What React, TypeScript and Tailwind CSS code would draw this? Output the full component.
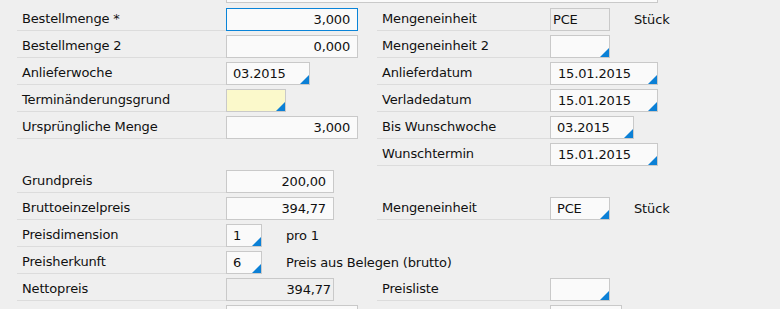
import React from "react";

type Variant = "normal" | "focus" | "readonly" | "yellow";

function Tri() {
  return (
    <svg className="absolute bottom-0 right-0" width="9" height="9" viewBox="0 0 9 9">
      <polygon points="9,0 9,9 0,9" fill="#0b80d6" />
    </svg>
  );
}

function Box({
  w,
  value = "",
  right = false,
  variant = "normal",
  tri = false,
  pad,
}: {
  w: string;
  value?: string;
  right?: boolean;
  variant?: Variant;
  tri?: boolean;
  pad: string;
}) {
  const v =
    variant === "focus"
      ? "border-[#0a84d8] bg-[#fafafa]"
      : variant === "readonly"
      ? "border-[#c9c9c9] bg-[#efefef]"
      : variant === "yellow"
      ? "border-[#c9c9c9] bg-[#fbf9cb]"
      : "border-[#c9c9c9] bg-[#fafafa]";
  return (
    <div
      className={`relative h-[23px] shrink-0 border leading-[21px] whitespace-nowrap ${w} ${v} ${pad} ${
        right ? "text-right" : "text-left"
      }`}
    >
      {value}
      {tri && <Tri />}
    </div>
  );
}

function Label({ text, w, line = true }: { text?: string; w: string; line?: boolean }) {
  return (
    <div
      className={`h-[27px] shrink-0 pl-[5px] pt-[4px] leading-[22px] whitespace-nowrap border-b ${w} ${
        line ? "border-[#dcdcdc]" : "border-transparent"
      }`}
    >
      {text}
    </div>
  );
}

function Row({
  l,
  lf,
  r,
  rf,
}: {
  l?: string;
  lf?: React.ReactNode;
  r?: string;
  rf?: React.ReactNode;
}) {
  return (
    <div className="flex h-[27px] items-end">
      <Label text={l} w="w-[209px]" line={!!l} />
      <div className="flex h-[27px] w-[151px] shrink-0 items-end">{lf}</div>
      <Label text={r} w="w-[173px]" line={!!r} />
      <div className="flex h-[27px] items-end">{rf}</div>
    </div>
  );
}

function After({ text }: { text: string }) {
  return <div className="ml-[24px] h-[23px] leading-[23px] whitespace-nowrap">{text}</div>;
}

export default function App() {
  return (
    <div
      className="h-[309px] w-[780px] overflow-hidden bg-[#efefef] text-[13px] tracking-[-0.15px] text-[#111]"
      style={{ fontFamily: '"DejaVu Sans", Verdana, sans-serif' }}
    >
      <div className="ml-[226px] h-[3px] w-[432px] border-x border-b border-[#c9c9c9] bg-[#fafafa]" />
      <div className="mt-[1px] pl-[17px]">
        <Row
          l="Bestellmenge *"
          lf={<Box w="w-[132px]" value="3,000" right variant="focus" pad="pr-[7px]" />}
          r="Mengeneinheit"
          rf={
            <>
              <Box w="w-[60px]" value="PCE" variant="readonly" pad="pl-[2px]" />
              <After text="Stück" />
            </>
          }
        />
        <Row
          l="Bestellmenge 2"
          lf={<Box w="w-[132px]" value="0,000" right pad="pr-[7px]" />}
          r="Mengeneinheit 2"
          rf={<Box w="w-[60px]" tri pad="pl-[6px]" />}
        />
        <Row
          l="Anlieferwoche"
          lf={<Box w="w-[84px]" value="03.2015" tri pad="pl-[6px]" />}
          r="Anlieferdatum"
          rf={<Box w="w-[108px]" value="15.01.2015" tri pad="pl-[7px]" />}
        />
        <Row
          l="Terminänderungsgrund"
          lf={<Box w="w-[60px]" variant="yellow" tri pad="pl-[6px]" />}
          r="Verladedatum"
          rf={<Box w="w-[108px]" value="15.01.2015" tri pad="pl-[7px]" />}
        />
        <Row
          l="Ursprüngliche Menge"
          lf={<Box w="w-[132px]" value="3,000" right pad="pr-[7px]" />}
          r="Bis Wunschwoche"
          rf={<Box w="w-[84px]" value="03.2015" tri pad="pl-[6px]" />}
        />
        <Row r="Wunschtermin" rf={<Box w="w-[108px]" value="15.01.2015" tri pad="pl-[7px]" />} />
        <Row l="Grundpreis" lf={<Box w="w-[108px]" value="200,00" right pad="pr-[7px]" />} />
        <Row
          l="Bruttoeinzelpreis"
          lf={<Box w="w-[108px]" value="394,77" right pad="pr-[7px]" />}
          r="Mengeneinheit"
          rf={
            <>
              <Box w="w-[60px]" value="PCE" tri pad="pl-[6px]" />
              <After text="Stück" />
            </>
          }
        />
        <Row
          l="Preisdimension"
          lf={
            <>
              <Box w="w-[36px]" value="1" tri pad="pl-[6px]" />
              <After text="pro 1" />
            </>
          }
        />
        <Row
          l="Preisherkunft"
          lf={
            <>
              <Box w="w-[36px]" value="6" tri pad="pl-[6px]" />
              <After text="Preis aus Belegen (brutto)" />
            </>
          }
        />
        <Row
          l="Nettopreis"
          lf={<Box w="w-[108px]" value="394,77" right variant="readonly" pad="pr-[2px]" />}
          r="Preisliste"
          rf={<Box w="w-[60px]" tri pad="pl-[6px]" />}
        />
        <Row lf={<Box w="w-[132px]" pad="pl-[6px]" />} rf={<Box w="w-[72px]" pad="pl-[6px]" />} />
      </div>
    </div>
  );
}
